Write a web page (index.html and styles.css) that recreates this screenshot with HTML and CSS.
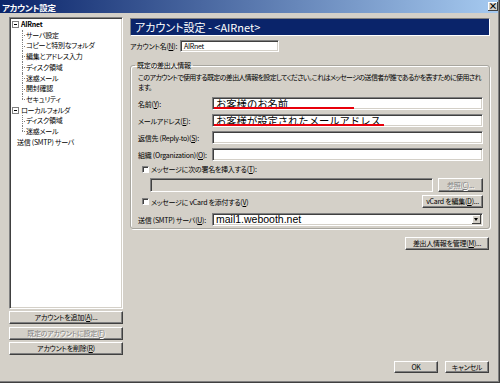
FILE: index.html
```html
<!DOCTYPE html>
<html lang="ja">
<head>
  <meta charset="UTF-8" />
  <title>アカウント設定</title>
  <link rel="stylesheet" href="styles.css">
</head>
<body>
  <div class="window">
    <div class="titlebar">
      <span>アカウント設定</span>
      <span class="close">×</span>
    </div>

    <div class="dialog">
      <div class="sidebar">
        <ul class="tree">
          <li class="node">
            <span class="toggle"></span><b>AIRnet</b>
            <ul class="branch">
              <li>サーバ設定</li>
              <li>コピーと特別なフォルダ</li>
              <li>編集とアドレス入力</li>
              <li>ディスク領域</li>
              <li>迷惑メール</li>
              <li>開封確認</li>
              <li>セキュリティ</li>
            </ul>
          </li>
          <li class="node">
            <span class="toggle"></span>ローカルフォルダ
            <ul class="branch">
              <li>ディスク領域</li>
              <li>迷惑メール</li>
            </ul>
          </li>
          <li class="leaf">送信 (SMTP) サーバ</li>
        </ul>
        <div class="side-buttons">
          <button class="btn">アカウントを追加(<u>A</u>)...</button>
          <button class="btn disabled">既定のアカウントに設定(<u>F</u>)</button>
          <button class="btn">アカウントを削除(<u>R</u>)</button>
        </div>
      </div>

      <div class="main">
        <div class="header">アカウント設定 - &lt;AIRnet&gt;</div>

        <div class="account-row">
          <label>アカウント名(<u>N</u>):</label>
          <div class="input account-input">AIRnet</div>
        </div>

        <fieldset class="group">
          <legend>既定の差出人情報</legend>
          <p class="desc">このアカウントで使用する既定の差出人情報を設定してください。これはメッセージの送信者が誰であるかを表すために使用されます。</p>

          <div class="row first">
            <label>名前(<u>Y</u>):</label>
            <div class="input big">お客様のお名前<span class="mark mark-name"></span></div>
          </div>
          <div class="row">
            <label>メールアドレス(<u>E</u>):</label>
            <div class="input big">お客様が設定されたメールアドレス<span class="mark mark-mail"></span></div>
          </div>
          <div class="row">
            <label>返信先 (Reply-to)(<u>S</u>):</label>
            <div class="input"></div>
          </div>
          <div class="row">
            <label>組織 (Organization)(<u>O</u>):</label>
            <div class="input"></div>
          </div>

          <div class="check-row">
            <span class="check"></span>
            <span>メッセージに次の署名を挿入する(<u>T</u>):</span>
          </div>
          <div class="sig-row">
            <div class="input off"></div>
            <button class="btn disabled browse">参照(<u>C</u>)...</button>
          </div>
          <div class="check-row vcard-row">
            <span class="check"></span>
            <span>メッセージに vCard を添付する(<u>V</u>)</span>
            <button class="btn vcard">vCard を編集(<u>D</u>)...</button>
          </div>

          <div class="row smtp-row">
            <label>送信 (SMTP) サーバ(<u>U</u>):</label>
            <div class="input select">
              <span class="value">mail1.webooth.net</span>
              <span class="arrow"></span>
            </div>
          </div>
        </fieldset>

        <button class="btn manage">差出人情報を管理(<u>M</u>)...</button>

        <div class="footer">
          <button class="btn footer-btn">OK</button>
          <button class="btn footer-btn">キャンセル</button>
        </div>
      </div>
    </div>
  </div>
</body>
</html>
```

FILE: styles.css
```css
* {
  margin: 0;
  padding: 0;
  box-sizing: border-box;
}

body {
  width: 500px;
  height: 383px;
  overflow: hidden;
  background: #d4d0c8;
  color: #000;
  font-family: "Noto Sans CJK JP", "Noto Sans", sans-serif;
  font-size: 7px;
  letter-spacing: -0.25px;
  line-height: 10px;
  font-feature-settings: "palt";
}

u {
  text-decoration: underline;
}

.window {
  height: 383px;
  display: flex;
  flex-direction: column;
  border-right: 1px solid #404040;
  border-bottom: 1px solid #404040;
  padding: 0 1px 1px 0;
  box-shadow: inset -1px -1px 0 #808080;
}

/* title bar */
.titlebar {
  height: 13px;
  flex-shrink: 0;
  display: flex;
  align-items: center;
  justify-content: space-between;
  padding-left: 2px;
  background: linear-gradient(to right, #0a246a, #a6caf0);
  color: #fff;
  font-weight: bold;
  font-size: 8.5px;
  letter-spacing: -0.3px;
}

.close {
  width: 10px;
  height: 9px;
  background: #d4d0c8;
  color: #000;
  font-size: 9px;
  line-height: 8px;
  text-align: center;
  letter-spacing: 0;
  box-shadow: inset -1px -1px 0 #404040, inset 1px 1px 0 #fff;
}

.dialog {
  flex: 1;
  display: flex;
  padding-left: 9px;
}

/* left side */
.sidebar {
  width: 114px;
  display: flex;
  flex-direction: column;
  padding: 4px 0 26px;
}

.tree {
  flex: 1;
  list-style: none;
  background: #fff;
  border: 1px solid;
  border-color: #808080 #fff #fff #808080;
  box-shadow: inset 1px 1px 0 #404040, inset -1px -1px 0 #d4d0c8;
  padding: 1px 0 0 1px;
  line-height: 10.7px;
  white-space: nowrap;
}

.tree b {
  font-weight: bold;
}

.toggle {
  display: inline-block;
  position: relative;
  width: 7px;
  height: 7px;
  margin: 0 2px 0 1px;
  vertical-align: -1px;
  border: 1px solid #808080;
  background: #fff;
}

.toggle::after {
  content: "";
  position: absolute;
  left: 1px;
  top: 2px;
  width: 3px;
  height: 1px;
  background: #000;
}

.branch {
  list-style: none;
  margin-left: 11px;
}

.branch li {
  position: relative;
  padding-left: 4px;
}

.branch li::before {
  content: "";
  position: absolute;
  left: 0;
  top: 0;
  bottom: 0;
  border-left: 1px dotted #808080;
}

.branch li:last-child::before {
  bottom: 50%;
}

.branch li::after {
  content: "";
  position: absolute;
  left: 0;
  top: 50%;
  width: 3px;
  border-top: 1px dotted #808080;
}

.leaf {
  padding-left: 6px;
}

/* buttons */
.btn {
  height: 13px;
  font: inherit;
  letter-spacing: inherit;
  line-height: 11px;
  color: #000;
  text-align: center;
  background: #d4d0c8;
  border: 1px solid;
  border-color: #fff #404040 #404040 #fff;
  box-shadow: inset -1px -1px 0 #808080;
  padding: 0 2px;
  white-space: nowrap;
}

.btn.disabled {
  color: #808080;
  text-shadow: 1px 1px 0 #fff;
}

.side-buttons {
  display: flex;
  flex-direction: column;
  gap: 2.5px;
  margin-top: 2px;
}

/* right side */
.main {
  width: 360px;
  margin-left: 7px;
  display: flex;
  flex-direction: column;
  padding: 5px 0 8px;
}

.header {
  height: 18px;
  padding-left: 4px;
  background: #0a246a;
  color: #fff;
  font-size: 11px;
  letter-spacing: 0;
  line-height: 16px;
  border: 1px solid;
  border-color: #808080 #fff #fff #808080;
}

.input {
  position: relative;
  height: 13px;
  background: #fff;
  border: 1px solid;
  border-color: #808080 #fff #fff #808080;
  box-shadow: inset 1px 1px 0 #404040, inset -1px -1px 0 #d4d0c8;
  padding-left: 3px;
  line-height: 11px;
  white-space: nowrap;
}

.input.off {
  background: #d4d0c8;
}

.account-row {
  display: flex;
  align-items: center;
  margin-top: 4px;
}

.account-row label {
  width: 50px;
  white-space: nowrap;
}

.account-input {
  width: 99px;
  height: 12px;
  line-height: 10px;
}

.group {
  margin-top: 8px;
  border: 1px solid #a8a69f;
  border-radius: 3px;
  box-shadow: 1px 1px 0 #fff, inset 1px 1px 0 #fff;
  padding: 0 6px 2px 7px;
}

.group legend {
  margin-left: -3px;
  padding: 0 2px;
  line-height: 10px;
}

.desc {
  margin: 2px -3px 0 0;
  letter-spacing: -0.65px;
}

.row {
  display: flex;
  align-items: center;
  margin-top: 4px;
}

.row.first {
  margin-top: 5px;
}

.row label {
  width: 74px;
  flex-shrink: 0;
  white-space: nowrap;
}

.row .input {
  flex: 1;
}

.input.big {
  font-size: 10.3px;
  letter-spacing: 0;
  font-feature-settings: normal;
  line-height: 11px;
}

.mark {
  position: absolute;
  left: 1px;
  bottom: 0;
  height: 2px;
  background: #e8000b;
}

.mark-name {
  width: 140px;
}

.mark-mail {
  width: 170px;
}

.check-row {
  display: flex;
  align-items: center;
  gap: 2px;
  height: 10px;
  margin-top: 3px;
  padding-left: 4px;
  white-space: nowrap;
}

.check {
  width: 7px;
  height: 7px;
  background: #fff;
  border: 1px solid;
  border-color: #808080 #fff #fff #808080;
  box-shadow: inset 1px 1px 0 #404040;
}

.sig-row {
  display: flex;
  gap: 5px;
  margin: 4px 0 0 12px;
}

.sig-row .input {
  flex: 1;
  height: 14px;
}

.browse {
  width: 45px;
  height: 14px;
}

.vcard-row {
  height: 13px;
}

.vcard {
  margin-left: auto;
  width: 61px;
}

.smtp-row {
  margin-top: 5px;
}

.select {
  display: flex;
  align-items: center;
  justify-content: space-between;
  padding-right: 1px;
}

.select .value {
  font-family: "Liberation Sans", Arial, sans-serif;
  font-size: 10.5px;
  letter-spacing: 0;
}

.arrow {
  position: relative;
  width: 9px;
  height: 9px;
  background: #d4d0c8;
  box-shadow: inset -1px -1px 0 #404040, inset 1px 1px 0 #fff;
}

.arrow::after {
  content: "";
  position: absolute;
  left: 2px;
  top: 3px;
  border-left: 2.5px solid transparent;
  border-right: 2.5px solid transparent;
  border-top: 3px solid #000;
}

.manage {
  align-self: flex-end;
  margin: 8px 1px 0 0;
  width: 84px;
}

.footer {
  margin-top: auto;
  display: flex;
  justify-content: flex-end;
  gap: 7px;
  margin-right: 1px;
}

.footer-btn {
  width: 44px;
  height: 12px;
  line-height: 10px;
}
```
